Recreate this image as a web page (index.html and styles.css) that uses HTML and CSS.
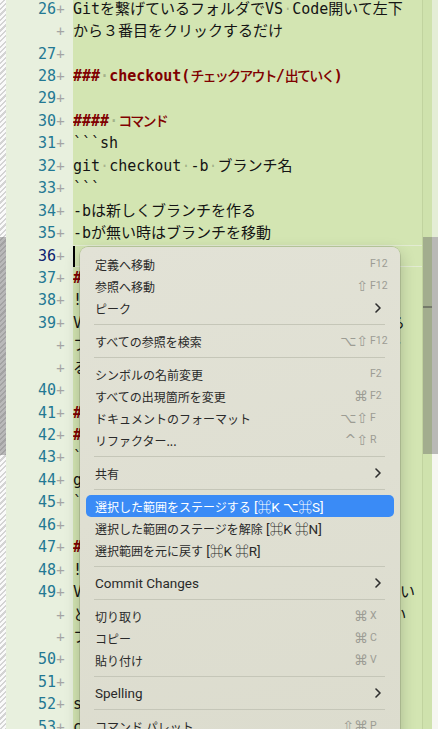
FILE: index.html
```html
<!DOCTYPE html>
<html lang="ja">
<head>
<meta charset="utf-8">
<title>Editor</title>
<link rel="stylesheet" href="styles.css">
</head>
<body>
<div class="editor">
  <div class="sash"><div class="sash-slider"></div></div>
  <div class="pane">
    <div class="rows">
      <div class="row"><div class="gutter"><span class="ln">26</span><span class="plus">+</span></div><div class="code">Gitを繋げているフォルダでVS<span class="ws">·</span>Code開いて左下</div></div>
      <div class="row"><div class="gutter"><span class="ln"></span><span class="plus">+</span></div><div class="code">から３番目をクリックするだけ</div></div>
      <div class="row"><div class="gutter"><span class="ln">27</span><span class="plus">+</span></div><div class="code"></div></div>
      <div class="row"><div class="gutter"><span class="ln">28</span><span class="plus">+</span></div><div class="code"><span class="h">###<span class="ws">·</span>checkout(<span class="j">チェックアウト</span>/<span class="j">出ていく</span>)</span></div></div>
      <div class="row"><div class="gutter"><span class="ln">29</span><span class="plus">+</span></div><div class="code"></div></div>
      <div class="row"><div class="gutter"><span class="ln">30</span><span class="plus">+</span></div><div class="code"><span class="h">####<span class="ws">·</span><span class="j">コマンド</span></span></div></div>
      <div class="row"><div class="gutter"><span class="ln">31</span><span class="plus">+</span></div><div class="code">```sh</div></div>
      <div class="row"><div class="gutter"><span class="ln">32</span><span class="plus">+</span></div><div class="code">git<span class="ws">·</span>checkout<span class="ws">·</span>-b<span class="ws">·</span>ブランチ名</div></div>
      <div class="row"><div class="gutter"><span class="ln">33</span><span class="plus">+</span></div><div class="code">```</div></div>
      <div class="row"><div class="gutter"><span class="ln">34</span><span class="plus">+</span></div><div class="code">-bは新しくブランチを作る</div></div>
      <div class="row"><div class="gutter"><span class="ln">35</span><span class="plus">+</span></div><div class="code">-bが無い時はブランチを移動</div></div>
      <div class="row cur"><div class="gutter"><span class="ln">36</span><span class="plus">+</span></div><div class="code"><span class="caret"></span></div></div>
      <div class="row"><div class="gutter"><span class="ln">37</span><span class="plus">+</span></div><div class="code"><span class="h">###<span class="ws">·</span>merge(<span class="j">マージ</span>)</span></div></div>
      <div class="row"><div class="gutter"><span class="ln">38</span><span class="plus">+</span></div><div class="code">![image](./images/checkout.png)</div></div>
      <div class="row"><div class="gutter"><span class="ln">39</span><span class="plus">+</span></div><div class="code">VS<span class="ws">·</span>Codeの左下のソース管理をクリックしてから</div></div>
      <div class="row"><div class="gutter"><span class="ln"></span><span class="plus">+</span></div><div class="code">ファイル名の横にあるプラスボタンを押すとでき</div></div>
      <div class="row"><div class="gutter"><span class="ln"></span><span class="plus">+</span></div><div class="code">る。</div></div>
      <div class="row"><div class="gutter"><span class="ln">40</span><span class="plus">+</span></div><div class="code"></div></div>
      <div class="row"><div class="gutter"><span class="ln">41</span><span class="plus">+</span></div><div class="code"><span class="h">###<span class="ws">·</span>add(<span class="j">ステージング</span>)</span></div></div>
      <div class="row"><div class="gutter"><span class="ln">42</span><span class="plus">+</span></div><div class="code"><span class="h">####<span class="ws">·</span><span class="j">コマンド</span></span></div></div>
      <div class="row"><div class="gutter"><span class="ln">43</span><span class="plus">+</span></div><div class="code">```sh</div></div>
      <div class="row"><div class="gutter"><span class="ln">44</span><span class="plus">+</span></div><div class="code">git<span class="ws">·</span>add<span class="ws">·</span>.</div></div>
      <div class="row"><div class="gutter"><span class="ln">45</span><span class="plus">+</span></div><div class="code">```</div></div>
      <div class="row"><div class="gutter"><span class="ln">46</span><span class="plus">+</span></div><div class="code"></div></div>
      <div class="row"><div class="gutter"><span class="ln">47</span><span class="plus">+</span></div><div class="code"><span class="h">###<span class="ws">·</span>commit(<span class="j">コミット</span>)</span></div></div>
      <div class="row"><div class="gutter"><span class="ln">48</span><span class="plus">+</span></div><div class="code">![image](./images/add.png)</div></div>
      <div class="row"><div class="gutter"><span class="ln">49</span><span class="plus">+</span></div><div class="code">VS<span class="ws">·</span>Codeの+ボタンを押すとステージされるらしい</div></div>
      <div class="row"><div class="gutter"><span class="ln"></span><span class="plus">+</span></div><div class="code">とりあえずgit<span class="ws">·</span>addと同じような動きと見て良い</div></div>
      <div class="row"><div class="gutter"><span class="ln"></span><span class="plus">+</span></div><div class="code">ファイル単位でステージできる</div></div>
      <div class="row"><div class="gutter"><span class="ln">50</span><span class="plus">+</span></div><div class="code"></div></div>
      <div class="row"><div class="gutter"><span class="ln">51</span><span class="plus">+</span></div><div class="code"></div></div>
      <div class="row"><div class="gutter"><span class="ln">52</span><span class="plus">+</span></div><div class="code">stashで一時退避</div></div>
      <div class="row"><div class="gutter"><span class="ln">53</span><span class="plus">+</span></div><div class="code">commit<span class="ws">·</span>-m</div></div>
    </div>
  </div>
  <div class="ruler"><div class="ruler-slider"><div class="ruler-cursor"></div></div></div>
</div>

<div class="menu">
  <div class="mi"><span class="ja">定義へ移動</span><span class="sc"><span class="key">F12</span></span></div>
  <div class="mi"><span class="ja">参照へ移動</span><span class="sc"><span class="mods">⇧</span><span class="key">F12</span></span></div>
  <div class="mi"><span class="ja">ピーク</span><svg class="chev" width="6" height="10" viewBox="0 0 6 10"><path d="M1 1L5 5L1 9" fill="none" stroke="#2e2e2e" stroke-width="1.6" stroke-linecap="round" stroke-linejoin="round"/></svg></div>
  <div class="sep"></div>
  <div class="mi"><span class="ja">すべての参照を検索</span><span class="sc"><span class="mods">⌥⇧</span><span class="key">F12</span></span></div>
  <div class="sep"></div>
  <div class="mi"><span class="ja">シンボルの名前変更</span><span class="sc"><span class="key">F2</span></span></div>
  <div class="mi"><span class="ja">すべての出現箇所を変更</span><span class="sc"><span class="mods">⌘</span><span class="key">F2</span></span></div>
  <div class="mi"><span class="ja">ドキュメントのフォーマット</span><span class="sc"><span class="mods">⌥⇧</span><span class="key">F</span></span></div>
  <div class="mi"><span class="ja">リファクター...</span><span class="sc"><span class="mods">^⇧</span><span class="key">R</span></span></div>
  <div class="sep"></div>
  <div class="mi"><span class="ja">共有</span><svg class="chev" width="6" height="10" viewBox="0 0 6 10"><path d="M1 1L5 5L1 9" fill="none" stroke="#2e2e2e" stroke-width="1.6" stroke-linecap="round" stroke-linejoin="round"/></svg></div>
  <div class="sep"></div>
  <div class="mi sel"><span><span class="ja">選択した範囲をステージする</span> [⌘K ⌥⌘S]</span></div>
  <div class="mi"><span><span class="ja">選択した範囲のステージを解除</span> [⌘K ⌘N]</span></div>
  <div class="mi"><span><span class="ja">選択範囲を元に戻す</span> [⌘K ⌘R]</span></div>
  <div class="sep"></div>
  <div class="mi"><span>Commit Changes</span><svg class="chev" width="6" height="10" viewBox="0 0 6 10"><path d="M1 1L5 5L1 9" fill="none" stroke="#2e2e2e" stroke-width="1.6" stroke-linecap="round" stroke-linejoin="round"/></svg></div>
  <div class="sep"></div>
  <div class="mi"><span class="ja">切り取り</span><span class="sc"><span class="mods">⌘</span><span class="key">X</span></span></div>
  <div class="mi"><span class="ja">コピー</span><span class="sc"><span class="mods">⌘</span><span class="key">C</span></span></div>
  <div class="mi"><span class="ja">貼り付け</span><span class="sc"><span class="mods">⌘</span><span class="key">V</span></span></div>
  <div class="sep"></div>
  <div class="mi"><span>Spelling</span><svg class="chev" width="6" height="10" viewBox="0 0 6 10"><path d="M1 1L5 5L1 9" fill="none" stroke="#2e2e2e" stroke-width="1.6" stroke-linecap="round" stroke-linejoin="round"/></svg></div>
  <div class="sep"></div>
  <div class="mi"><span class="ja">コマンド パレット...</span><span class="sc"><span class="mods">⇧⌘</span><span class="key">P</span></span></div>
</div>
</body>
</html>
```

FILE: styles.css
```css
* { box-sizing: border-box; }
html, body { margin: 0; padding: 0; }
body {
  width: 438px;
  height: 729px;
  overflow: hidden;
  position: relative;
  background: #ffffff;
}

.editor {
  display: flex;
  height: 729px;
}

/* left hatched strip (other diff side) */
.sash {
  width: 6px;
  flex: none;
  background: repeating-linear-gradient(135deg, #fafafa 0 2.2px, #d4d4d4 2.2px 3.8px);
}
.sash-slider {
  margin-top: 237px;
  height: 218px;
  background: rgba(95, 95, 95, 0.42);
}

.pane {
  width: 416px;
  flex: none;
  overflow: hidden;
  background: #d3e5b2;
}
.rows { margin-top: -2.3px; }

.row {
  display: flex;
  height: 22.44px;
  line-height: 22.44px;
  font-family: "DejaVu Sans Mono", "Noto Sans CJK JP", monospace;
  font-size: 15px;
}
.gutter {
  width: 67px;
  flex: none;
  display: flex;
  background: #e8f0de;
}
.ln {
  width: 50px;
  text-align: right;
  color: #237893;
}
.cur .ln { color: #0b216f; }
.plus {
  width: 9px;
  text-align: center;
  color: #a4a4a4;
  font-size: 14px;
}
.code {
  flex: 1;
  white-space: pre;
  color: #141414;
  overflow: hidden;
}
.cur .code {
  box-shadow: inset 0 1px #e2ebd2, inset 0 -1px #e2ebd2;
}
.caret {
  display: inline-block;
  width: 2px;
  height: 21px;
  margin-top: 1px;
  background: #000;
  vertical-align: top;
}
.ws { color: rgba(0, 0, 0, 0.22); }
.h { color: #800000; font-weight: bold; }
.j {
  font-weight: 500;
  font-size: 14px;
  letter-spacing: -1.8px;
}

/* overview ruler + scrollbar */
.ruler {
  width: 16px;
  flex: none;
  border-left: 1px solid #c1d39f;
  background:
    linear-gradient(to right, #cfe2ad 9px, transparent 9px),
    linear-gradient(#e4edd6 237px, #f6f6f1 237px);
}
.ruler-slider {
  margin-top: 237px;
  height: 217px;
  padding-top: 69px;
  background: rgba(100, 100, 100, 0.42);
}
.ruler-cursor {
  width: 9px;
  height: 2px;
  background: rgba(60, 60, 60, 0.45);
}

/* context menu */
.menu {
  position: absolute;
  left: 80px;
  top: 247px;
  width: 320px;
  padding: 6px 0;
  border-radius: 8px;
  background: linear-gradient(170deg, #e2e2d6 0%, #dcdcce 100%);
  box-shadow: 0 0 0 0.5px rgba(0, 0, 0, 0.22), 0 6px 16px rgba(0, 0, 0, 0.22);
  font-family: Roboto, "Noto Sans CJK JP", "DejaVu Sans", sans-serif;
  font-size: 13.5px;
  color: #2a2a2a;
  display: flex;
  flex-direction: column;
}
.mi {
  height: 22px;
  margin: 0 6px;
  padding: 0 9px;
  border-radius: 5px;
  display: flex;
  align-items: center;
  justify-content: space-between;
  white-space: nowrap;
}
.mi.sel {
  background: #3a8bf6;
  color: #ffffff;
}
.ja {
  font-family: "Noto Sans CJK JP", sans-serif;
  font-size: 12px;
}
.sep {
  height: 11px;
  margin: 0 15px 0 14px;
  display: flex;
  align-items: center;
}
.sep::after {
  content: "";
  flex: 1;
  height: 1px;
  background: #c5c6b8;
}
.sc {
  display: flex;
  align-items: center;
  line-height: 14px;
  color: #9c9c94;
}
.mods {
  font-family: "DejaVu Sans", sans-serif;
  font-size: 14px;
  margin-right: 2px;
}
.key {
  width: 15px;
  font-size: 10.5px;
  text-align: left;
}
.chev { margin-right: 4px; }
```
